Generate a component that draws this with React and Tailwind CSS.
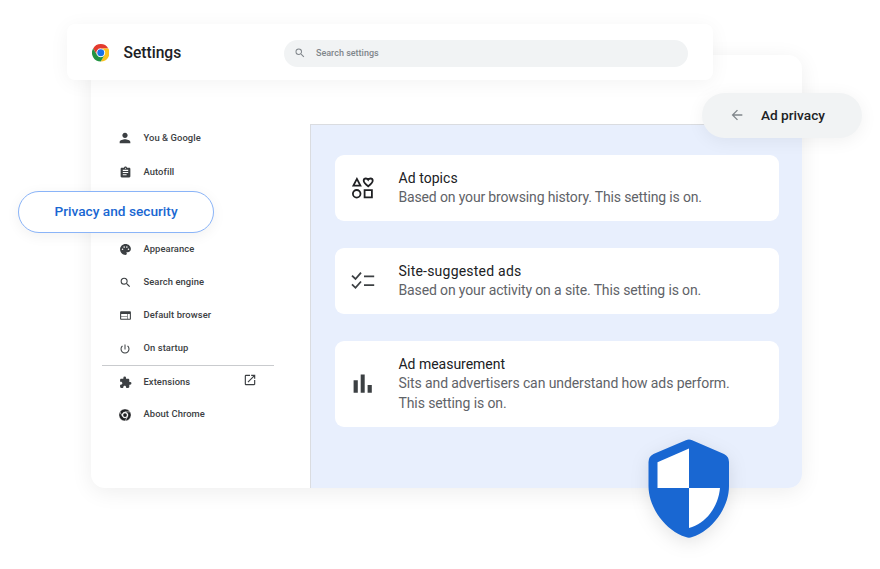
import React from "react";
import {
  MdPerson,
  MdAssignment,
  MdPalette,
  MdSearch,
  MdWeb,
  MdPowerSettingsNew,
  MdExtension,
  MdOpenInNew,
  MdArrowBack,
} from "react-icons/md";

const RED = "M24,12H44.7812a23.9939,23.9939,0,0,0-41.5639.0029L13.6079,30l.0093-.0024A11.9852,11.9852,0,0,1,24,12Z";
const YELLOW = "M34.3913,30.0029,24.0007,48A23.994,23.994,0,0,0,44.78,12.0031H23.9989l-.0025.0093A11.985,11.985,0,0,1,34.3913,30.0029Z";
const GREEN = "M13.6086,30.0031,3.218,12.006A23.994,23.994,0,0,0,24.0025,48L34.3931,30.0029l-.0067-.0068a11.9852,11.9852,0,0,1-20.7778.007Z";

function ChromeLogo({ className }) {
  return (
    <svg viewBox="0 0 48 48" className={className}>
      <circle cx="24" cy="24" r="12" fill="#fff" />
      <path d={RED} fill="#e33b2e" />
      <path d={YELLOW} fill="#fcc31e" />
      <path d={GREEN} fill="#229342" />
      <circle cx="24" cy="24" r="9.5" fill="#1a73e8" />
    </svg>
  );
}

function ChromeMono({ className }) {
  return (
    <svg viewBox="0 0 48 48" className={className}>
      <g fill="#202124" stroke="#fff" strokeWidth="1.6">
        <path d={RED} />
        <path d={YELLOW} />
        <path d={GREEN} />
      </g>
      <circle cx="24" cy="24" r="7.5" fill="#202124" />
    </svg>
  );
}

function TopicsIcon() {
  return (
    <svg viewBox="0 0 24 24" className="h-6 w-6" fill="none" stroke="#202124" strokeWidth="1.8">
      <path d="M5.9 2.9 9.4 9.6H2.4Z" />
      <path d="M17.2 10.3C14.3 8 12.7 6.4 12.7 4.7c0-1.3 1-2.2 2.2-2.2 1 0 1.8.5 2.3 1.3.5-.8 1.3-1.3 2.3-1.3 1.2 0 2.2.9 2.2 2.2 0 1.7-1.6 3.3-4.5 5.6Z" />
      <circle cx="5.7" cy="17.8" r="3.8" />
      <path d="M13.6 14.1h7.3v7.3h-7.3z" />
    </svg>
  );
}

function ChecklistIcon() {
  return (
    <svg viewBox="0 0 24 24" className="h-6 w-6" fill="none" stroke="#3c4043" strokeWidth="1.8">
      <path d="m1 6.6 3.5 3.4L10 3.7M1 15.4l3.5 3.4 5.5-6.3M13 7.4h10.2M13 16.2h10.2" />
    </svg>
  );
}

function BarsIcon() {
  return (
    <svg viewBox="0 0 24 24" className="h-6 w-6" fill="#3c4043">
      <path d="M2.6 8.2h4.2v12.6H2.6zM9.7 2.6h4v18.2h-4zM16.6 13h4.2v7.8h-4.2z" />
    </svg>
  );
}

const items = [
  { label: "You & Google", Icon: MdPerson, row: "mt-px", icon: "mb-px h-4 w-4" },
  { label: "Autofill", Icon: MdAssignment, row: "mt-px", icon: "h-[13px] w-[13px]" },
  { label: "Appearance", Icon: MdPalette, row: "mt-11", icon: "h-[13px] w-[13px]" },
  { label: "Search engine", Icon: MdSearch, row: "", icon: "h-[13px] w-[13px]" },
  { label: "Default browser", Icon: MdWeb, row: "", icon: "h-[13px] w-[13px]" },
  { label: "On startup", Icon: MdPowerSettingsNew, row: "", icon: "h-3 w-3" },
  { label: "Extensions", Icon: MdExtension, row: "border-t border-[#c9cbce]", icon: "h-[13px] w-[13px]", external: true },
  { label: "About Chrome", Icon: ChromeMono, row: "", icon: "h-3 w-3" },
];

const cards = [
  {
    title: "Ad topics",
    titleTracking: "tracking-[0.05px]",
    lines: ["Based on your browsing history. This setting is on."],
    lineTracking: "tracking-[-0.15px]",
    Icon: TopicsIcon,
    height: "h-[66px]",
  },
  {
    title: "Site-suggested ads",
    titleTracking: "tracking-[0.22px]",
    lines: ["Based on your activity on a site. This setting is on."],
    lineTracking: "tracking-[-0.13px]",
    Icon: ChecklistIcon,
    height: "h-[66px]",
  },
  {
    title: "Ad measurement",
    titleTracking: "tracking-[-0.02px]",
    lines: ["Sits and advertisers can understand how ads perform.", "This setting is on."],
    lineTracking: "tracking-[-0.1px]",
    Icon: BarsIcon,
    height: "h-[86px]",
  },
];

function SideItem({ label, Icon, row, icon, external }) {
  return (
    <li className={`flex h-[33px] items-center pl-[15px] ${row}`}>
      <span className="flex w-4 justify-center text-[#3c4043]">
        <Icon className={`shrink-0 ${icon}`} />
      </span>
      <span className="ml-[10px] text-[9.4px] font-medium tracking-[0.08px] text-[#3c4043]">{label}</span>
      {external && <MdOpenInNew className="mr-[17px] mb-1 ml-auto h-[14px] w-[14px] text-[#3c4043]" />}
    </li>
  );
}

function SettingCard({ title, titleTracking, lines, lineTracking, Icon, height }) {
  return (
    <article className={`flex items-center rounded-[9px] bg-white pl-4 ${height}`}>
      <Icon />
      <div className="ml-[23.5px] text-[14px] whitespace-nowrap">
        <h2 className={`leading-[19px] text-[#202124] ${titleTracking}`}>{title}</h2>
        {lines.map((line) => (
          <p key={line} className={`leading-[19.5px] text-[#5f6368] ${lineTracking}`}>
            {line}
          </p>
        ))}
      </div>
    </article>
  );
}

export default function App() {
  return (
    <div className="relative h-[569px] w-[880px] overflow-hidden bg-white pt-[55px] pl-[91.4px] font-['Roboto',sans-serif]">
      <main className="flex h-[433px] w-[711px] overflow-hidden rounded-[14px] bg-white shadow-[0_4px_22px_rgba(0,0,0,0.07)]">
        <ul className="w-[218.6px] pt-[66px] pr-9 pl-[11.1px]">
          {items.map((item) => (
            <SideItem key={item.label} {...item} />
          ))}
        </ul>
        <section className="mt-[69px] flex flex-1 flex-col gap-[27px] border-t border-l border-[#dadce0] bg-[#e8effd] pt-[30px] pr-[23.5px] pl-6">
          {cards.map((card) => (
            <SettingCard key={card.title} {...card} />
          ))}
        </section>
      </main>

      <header className="absolute top-6 left-[67.4px] flex h-14 w-[646px] items-center rounded-lg bg-white pl-[24.6px] shadow-[0_3px_20px_rgba(0,0,0,0.05)]">
        <ChromeLogo className="mt-[2px] h-[17.5px] w-[17.5px]" />
        <h1 className="mt-[3px] ml-[14px] w-[161px] text-[15.6px] font-medium text-[#202124]">Settings</h1>
        <div className="mt-[2px] flex h-[27px] w-[404px] items-center rounded-full bg-[#f1f3f4] pl-[9.5px] text-[#80868b]">
          <MdSearch className="h-3 w-3" />
          <span className="mt-px ml-[10px] text-[9px] font-medium">Search settings</span>
        </div>
      </header>

      <div className="absolute top-[191px] left-[18px] flex h-[42px] w-[196px] items-center justify-center rounded-full border border-[#8ab4f8] bg-white text-[13.7px] font-medium text-[#1967d2] shadow-[0_3px_14px_rgba(0,0,0,0.06)]">
        <span className="-mt-px">Privacy and security</span>
      </div>

      <div className="absolute top-[93.4px] left-[702.4px] flex h-[45px] w-[159.5px] items-center rounded-full bg-[#f1f3f4] pb-px pl-[27px] shadow-[0_3px_18px_rgba(0,0,0,0.06)]">
        <MdArrowBack className="h-4 w-4 text-[#80868b]" />
        <span className="ml-[15.5px] text-[13.7px] font-medium text-[#202124]">Ad privacy</span>
      </div>

      <svg
        viewBox="0 0 82 100"
        className="absolute top-[438px] left-[648px] h-[100px] w-[82px] drop-shadow-[0_5px_9px_rgba(0,0,0,0.10)]"
      >
        <path
          d="M37.8 2.2Q41 .8 44.2 2.2L76 16Q81 18.5 81 24V48C81 70 64 93 44.2 99Q41 100.3 37.8 99C18 93 .5 70 .5 48V24Q.5 18.5 5.5 16Z"
          fill="#1967d2"
        />
        <path d="M41 10.5V50H9.5V24.3Z" fill="#fff" />
        <path d="M41 50H72C70.5 68 58 86 41 90Z" fill="#fff" />
      </svg>
    </div>
  );
}
